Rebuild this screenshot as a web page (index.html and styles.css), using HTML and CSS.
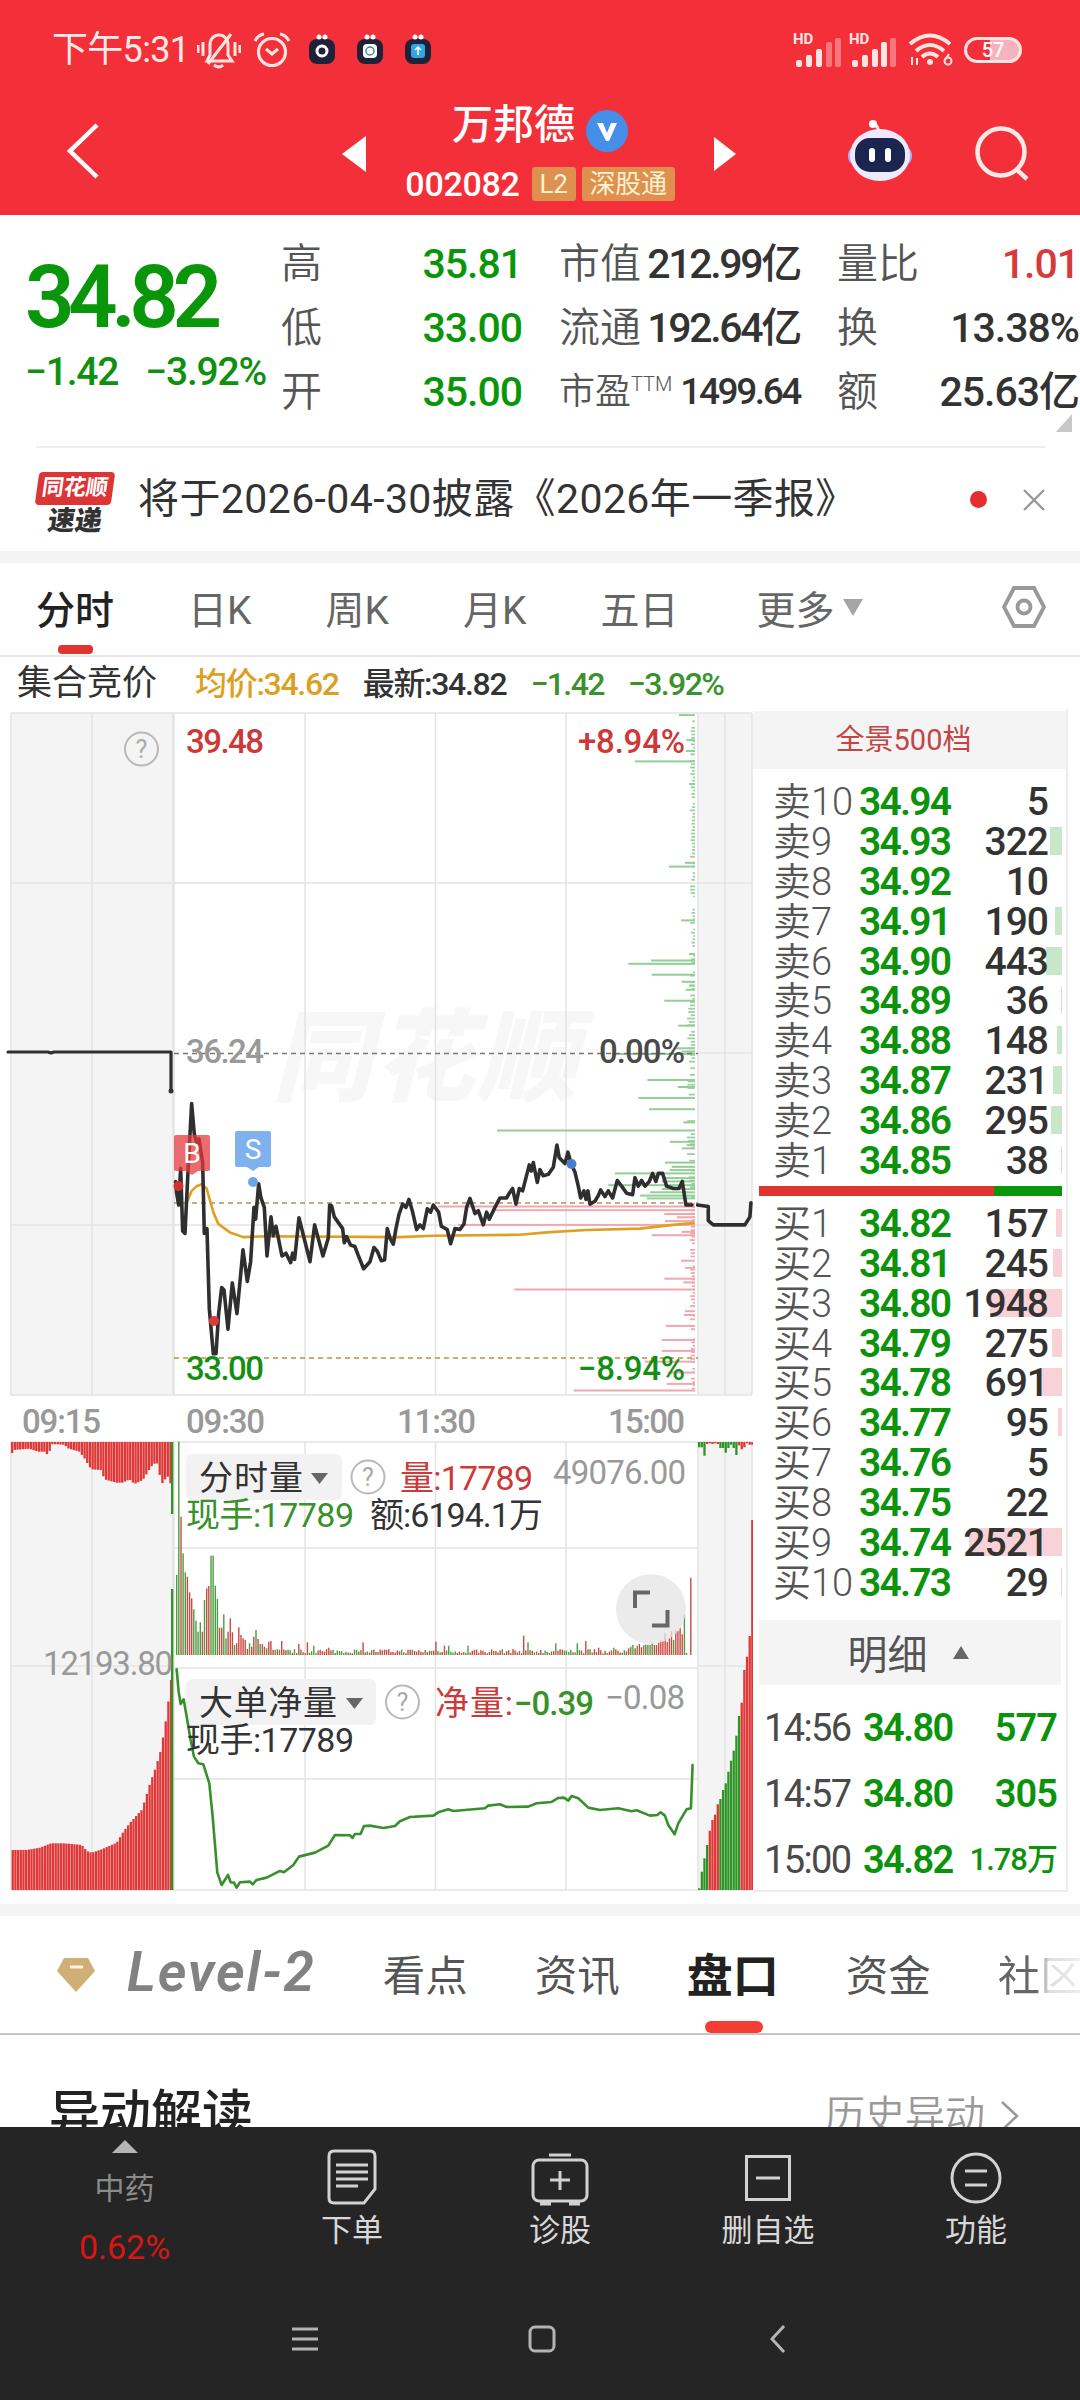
FILE: index.html
```html
<!DOCTYPE html>
<html lang="zh-CN">
<head>
  <meta charset="UTF-8">
  <meta name="viewport" content="width=device-width, initial-scale=1.0">
  <title>万邦德 002082</title>
  <link rel="stylesheet" href="styles.css">
</head>
<body>
  <header class="top">
    <div class="status">
      <span class="clock">下午5:31</span>
      <svg class="s-bell" width="44" height="38" viewBox="0 0 44 38" fill="none" stroke="#ffe4e0" stroke-width="3">
        <path d="M10 30h25l-4-6V14c0-6-4-10-9-10s-9 4-9 10v10z"/><path d="M17 34q5 4 9 0M34 3L11 33M6 11v14M1 14v8M38 11v14M43 14v8"/>
      </svg>
      <svg class="s-alarm" width="38" height="36" viewBox="0 0 38 36" fill="none" stroke="#ffe4e0" stroke-width="3.2">
        <circle cx="19" cy="20" r="13.5"/><path d="M13 17l6 5 6-5M2 9q3-6 9-7M36 9q-3-6-9-7"/>
      </svg>
      <svg class="s-app" width="28" height="32" viewBox="0 0 28 32"><rect x="1" y="5" width="26" height="25" rx="8" fill="#20223a"/><circle cx="11" cy="3" r="2.5" fill="#fff"/><circle cx="17" cy="3" r="2.5" fill="#fff"/><circle cx="14" cy="17" r="5" fill="none" stroke="#fff" stroke-width="3"/></svg>
      <svg class="s-app" width="28" height="32" viewBox="0 0 28 32"><rect x="1" y="5" width="26" height="25" rx="8" fill="#20223a"/><circle cx="11" cy="3" r="2.5" fill="#fff"/><circle cx="17" cy="3" r="2.5" fill="#fff"/><rect x="7" y="10" width="14" height="14" rx="4" fill="#fff"/><circle cx="14" cy="17" r="4" fill="none" stroke="#3a8f9a" stroke-width="1.5"/></svg>
      <svg class="s-app" width="28" height="32" viewBox="0 0 28 32"><rect x="1" y="5" width="26" height="25" rx="8" fill="#20223a"/><circle cx="11" cy="3" r="2.5" fill="#fff"/><circle cx="17" cy="3" r="2.5" fill="#fff"/><rect x="7" y="10" width="14" height="14" rx="3" fill="#2fa8e0"/><path d="M14 21v-8M11 16l3-3 3 3" fill="none" stroke="#fff" stroke-width="1.5"/></svg>
      <svg class="s-net" width="104" height="38" viewBox="0 -4 104 38" fill="#ffe4e0">
        <text class="hd" x="0" y="9">HD</text><text class="hd" x="56" y="9">HD</text>
        <rect x="3" y="25" width="6" height="7" rx="2"/><rect x="13" y="20" width="6" height="12" rx="2"/><rect x="23" y="14" width="6" height="18" rx="2"/>
        <g opacity=".4"><rect x="33" y="7" width="6" height="25" rx="2"/><rect x="42" y="3" width="6" height="29" rx="2"/></g>
        <rect x="59" y="25" width="6" height="7" rx="2"/><rect x="69" y="20" width="6" height="12" rx="2"/><rect x="79" y="14" width="6" height="18" rx="2"/><rect x="88" y="7" width="6" height="25" rx="2"/>
        <rect x="97" y="3" width="6" height="29" rx="2" opacity=".4"/>
      </svg>
      <svg class="s-wifi" width="46" height="34" viewBox="0 0 46 34" fill="none" stroke="#ffe4e0" stroke-width="4">
        <path d="M2 11q20-17 40 0M8 18q14-12 28 0M14 24q8-7 16 0"/><circle cx="22" cy="29" r="3" fill="#ffe4e0" stroke="none"/>
        <path stroke-width="2" d="M4 24v8M9 25v7"/><circle cx="40" cy="28" r="3.5" stroke-width="2"/><path stroke-width="2" d="M37 27l4-6"/>
      </svg>
      <div class="battery">57</div>
    </div>
    <div class="titlebar">
      <div class="back"><svg width="36" height="60" viewBox="0 0 36 60" fill="none" stroke="#fff" stroke-width="4.5"><path d="M33 4L6 30l27 26"/></svg></div>
      <svg width="24" height="36" viewBox="0 0 24 36"><path d="M0 18L24 0v36z" fill="#fff"/></svg>
      <div class="title">
        <div class="name"><span>万邦德</span><svg width="42" height="42" viewBox="0 0 42 42"><circle cx="21" cy="21" r="21" fill="#468fe8"/><path d="M11 13l9 18h3l8-18h-6l-4 10-4-10z" fill="#fff"/></svg></div>
        <div class="code">002082 <b>L2</b><b>深股通</b></div>
      </div>
      <svg width="22" height="34" viewBox="0 0 22 34"><path d="M22 17L0 0v34z" fill="#fff"/></svg>
      <div class="tools">
        <svg width="64" height="62" viewBox="0 0 64 62">
          <path d="M31 12q-2-8-6-9" fill="none" stroke="#ffe4ea" stroke-width="3"/><circle cx="25" cy="4" r="4" fill="#fff"/>
          <rect x="0" y="27" width="64" height="18" rx="8" fill="#b9a6ee"/><ellipse cx="32" cy="35" rx="30" ry="26" fill="#eeeafe"/><rect x="7" y="18" width="50" height="34" rx="15" fill="#1c2450"/>
          <rect x="21" y="28" width="6" height="14" rx="3" fill="#fff"/><rect x="37" y="28" width="6" height="14" rx="3" fill="#fff"/>
        </svg>
        <svg width="56" height="56" viewBox="0 0 56 56" fill="none" stroke="#ffe9e6" stroke-width="4.5"><circle cx="26" cy="26" r="23.5"/><path d="M41 43l11 10"/></svg>
      </div>
    </div>
  </header>

  <section class="quote">
    <div class="price">
      <div class="last">34.82</div>
      <div class="change"><span>−1.42</span><span>−3.92%</span></div>
    </div>
    <div class="stats">
      <div class="stat"><i>高</i><b class="green">35.81</b></div>
      <div class="stat tight"><i>市值</i><b>212.99亿</b></div>
      <div class="stat"><i>量比</i><b class="red">1.01</b></div>
      <div class="stat"><i>低</i><b class="green">33.00</b></div>
      <div class="stat tight"><i>流通</i><b>192.64亿</b></div>
      <div class="stat"><i>换</i><b>13.38%</b></div>
      <div class="stat"><i>开</i><b class="green">35.00</b></div>
      <div class="stat small"><i>市盈<sup>TTM</sup></i><b>1499.64</b></div>
      <div class="stat"><i>额</i><b>25.63亿</b></div>
    </div>
    <svg class="corner" width="16" height="18" viewBox="0 0 16 18"><path d="M16 0v18H0z" fill="#c8c8c8"/></svg>
  </section>

  <section class="news">
    <div class="news-logo"><span class="bubble">同花顺</span><span class="express">速递</span></div>
    <p>将于2026-04-30披露《2026年一季报》</p>
    <span class="dot"></span>
    <svg width="22" height="22" viewBox="0 0 22 22" stroke="#999" stroke-width="2.4"><path d="M1 1l20 20M21 1L1 21"/></svg>
  </section>

  <nav class="periods">
    <a class="active">分时</a><a>日K</a><a>周K</a><a>月K</a><a>五日</a>
    <a class="more">更多<svg width="20" height="17" viewBox="0 0 20 17"><path d="M0 0h20L10 17z" fill="#a5a5a5"/></svg></a>
    <svg class="hex" width="44" height="42" viewBox="0 0 44 42" fill="none" stroke="#999" stroke-width="3.8"><path d="M12 2h20l10 19-10 19H12L2 21z"/><circle cx="22" cy="21" r="6.5"/></svg>
  </nav>

  <div class="legend">
    <span class="auction">集合竞价</span><span class="avg">均价:34.62</span><span>最新:34.82</span><span class="lgreen">−1.42</span><span class="lgreen">−3.92%</span>
  </div>

  <main class="board">
    <svg class="charts" width="753" height="1184" viewBox="0 709 753 1184">
      <rect x="11" y="713" width="162" height="682" fill="#f4f4f4"/><rect x="698" y="713" width="54" height="682" fill="#f4f4f4"/>
      <rect x="11" y="1442" width="162" height="448" fill="#f4f4f4"/><rect x="698" y="1442" width="54" height="448" fill="#f4f4f4"/>
      <text class="watermark" x="272" y="1093" textLength="305">同花顺</text>
      <path class="grid" d="M11 713H752M11 883H752M11 1225H752M11 1395H752M698 1053H752M11 713V1395M92 713V1395M305 713V1395M435.500 713V1395M566 713V1395M698 713V1395M725 713V1395M752 713V1395
        M11 1442H752M173 1548H698M173 1668H698M11 1666H173M698 1666H752M173 1779H698M11 1890H752M11 1442V1890M92 1442V1890M305 1442V1890M435.500 1442V1890M566 1442V1890M698 1442V1890M725 1442V1890M752 1442V1890"/>
      <path class="grid thick" d="M173.500 713V1395M173.500 1442V1890"/>
      <g id="depth"></g>
      <path class="dash" d="M174 1053.500H698"/>
      <path class="dash brown" d="M174 1203H698"/>
      <path class="dash gold" d="M174 1358H698"/>
      <g transform="translate(0 700) scale(.3333 .472)"><polyline id="avg" class="line avg-line"/><polyline id="price" class="line"/><polyline id="close" class="line"/></g>
      <path class="line open-line" d="M8 1052H48l3 1 3-1H171V1091"/>
      <circle cx="171" cy="1091" r="2.500" fill="#333"/>

      <circle cx="178.500" cy="1186" r="5" fill="#d03232"/><circle cx="214" cy="1321" r="5" fill="#e03a3a"/>
      <circle cx="253" cy="1182" r="5" fill="#6aa6ea"/><circle cx="571.500" cy="1164" r="5" fill="#4a7fc8"/>
      <path d="M176 1135h32q2 0 2 2v32q0 2-2 2h-10l-6 4-6-4h-10q-2 0-2-2v-32q0-2 2-2z" fill="#e6393f" opacity=".75"/>
      <path d="M237 1131h32q2 0 2 2v32q0 2-2 2h-10l-6 4-6-4h-10q-2 0-2-2v-32q0-2 2-2z" fill="#7fb1ef"/>
      <text class="mark" x="192" y="1163">B</text><text class="mark" x="253" y="1159">S</text>

      <g class="help"><circle cx="141.500" cy="749" r="16.500"/><text x="141.500" y="758">?</text></g>
      <text class="num c-red" x="186" y="753" textLength="78">39.48</text>
      <text class="num c-gray" x="186" y="1063" textLength="78">36.24</text>
      <text class="num c-green" x="186" y="1380" textLength="78">33.00</text>
      <text class="num c-red" x="578" y="753" textLength="107">+8.94%</text>
      <text class="num c-dark" x="599" y="1063" textLength="86">0.00%</text>
      <text class="num c-green" x="578" y="1380" textLength="107">−8.94%</text>
      <text class="num c-gray" x="22" y="1433" textLength="79">09:15</text>
      <text class="num c-gray" x="186" y="1433" textLength="79">09:30</text>
      <text class="num c-gray" x="397" y="1433" textLength="79">11:30</text>
      <text class="num c-gray" x="608" y="1433" textLength="77">15:00</text>

      <g id="volume"></g>
      <g id="auction"></g>
      <text class="num c-gray reg" x="43" y="1675" textLength="130">12193.80</text>
      <rect x="186" y="1454" width="156" height="46" rx="6" fill="#f2f2f2"/>
      <text class="cn" x="199" y="1490" textLength="104">分时量</text>
      <path d="M311 1473h17l-8.500 11z" fill="#666"/>
      <g class="help"><circle cx="368" cy="1477" r="16.500"/><text x="368" y="1486">?</text></g>
      <text class="cn c-red" x="400" y="1490" textLength="133">量:17789</text>
      <text class="num c-gray reg" x="553" y="1484" textLength="133">49076.00</text>
      <text class="cn c-lgreen" x="186" y="1527" textLength="168">现手:17789</text>
      <text class="cn" x="370" y="1527" textLength="173">额:6194.1万</text>
      <circle cx="651" cy="1609" r="35" fill="#e4e4e4" opacity=".75"/>
      <path d="M635 1608V1592.500H650M652 1625.500H667.500V1610" fill="none" stroke="#666" stroke-width="4"/>

      <rect x="186" y="1679" width="190" height="46" rx="6" fill="#f2f2f2"/>
      <g transform="translate(0 1420) scale(.3333)"><polyline id="net" class="line net-line"/></g>
      <text class="cn" x="199" y="1715" textLength="138">大单净量</text>
      <path d="M346 1698h17l-8.500 11z" fill="#666"/>
      <g class="help"><circle cx="402.500" cy="1702" r="16.500"/><text x="402.500" y="1711">?</text></g>
      <text class="cn c-red" x="435" y="1715" textLength="78">净量:</text>
      <text class="num c-lgreen" x="514" y="1715" textLength="80">−0.39</text>
      <text class="num c-gray reg" x="605" y="1709" textLength="80">−0.08</text>
      <text class="cn" x="186" y="1752" textLength="168">现手:17789</text>
    </svg>

    <aside class="book">
      <div class="book-head">全景500档</div>
      <div class="rows" id="sells"></div>
      <div class="ratio"><span></span></div>
      <div class="rows" id="buys"></div>
      <div class="detail">明细<svg width="16" height="13" viewBox="0 0 16 13"><path d="M8 0l8 13H0z" fill="#666"/></svg></div>
      <div class="trade"><time>14:56</time><b>34.80</b><em>577</em></div>
      <div class="trade"><time>14:57</time><b>34.80</b><em>305</em></div>
      <div class="trade"><time>15:00</time><b>34.82</b><em class="wan">1.78万</em></div>
    </aside>
  </main>

  <nav class="sections">
    <svg width="40" height="36" viewBox="0 0 40 36"><path d="M8 1h24l7 13-19 21L1 14z" fill="#cfae78"/><path d="M14 10h13" stroke="#fff3dc" stroke-width="3"/></svg>
    <a class="level">Level-2</a><a>看点</a><a>资讯</a><a class="active">盘口</a><a>资金</a><a class="fade">社区</a>
  </nav>
  <section class="unusual">
    <h2>异动解读</h2>
    <a>历史异动<svg width="20" height="30" viewBox="0 0 20 30" fill="none" stroke="#999" stroke-width="2.500"><path d="M2 1l15 14L2 29"/></svg></a>
  </section>

  <footer>
    <div class="actions">
      <div class="index"><svg width="26" height="13" viewBox="0 0 26 13"><path d="M13 0l13 13H0z" fill="#b5b5b5"/></svg><span>中药</span><b>0.62%</b></div>
      <div class="action"><svg width="60" height="60" viewBox="0 0 60 60"><path d="M12 4h36q5 0 5 5v33L42 56H12q-5 0-5-5V9q0-5 5-5z"/><path d="M14 18h32M14 25h32M14 32h32M14 39h22"/></svg>下单</div>
      <div class="action"><svg width="60" height="60" viewBox="0 0 60 60"><rect x="3" y="13" width="54" height="41" rx="6"/><path d="M19 8h22M30 24v19M20 33h20"/><path stroke-width="5" d="M10 56h11M39 56h11"/></svg>诊股</div>
      <div class="action"><svg width="60" height="60" viewBox="0 0 60 60"><rect x="8.500" y="9.500" width="43" height="43"/><path d="M18 31h24"/></svg>删自选</div>
      <div class="action"><svg width="60" height="60" viewBox="0 0 60 60"><circle cx="30" cy="31" r="24"/><path d="M19 24h22M19 38h22"/></svg>功能</div>
    </div>
    <div class="system">
      <svg width="26" height="28" viewBox="0 0 26 28"><path d="M0 4h26M0 14h26M0 24h26"/></svg>
      <svg width="28" height="28" viewBox="0 0 28 28"><rect x="2" y="2" width="24" height="24" rx="5"/></svg>
      <svg width="16" height="28" viewBox="0 0 16 28"><path d="M14 1L2 14l12 13"/></svg>
    </div>
  </footer>
  <script src="script.js"></script>
</body>
</html>
```
FILE: styles.css
```css
body {
  margin: 0;
  width: 1080px;
  height: 2400px;
  overflow: hidden;
  background: #fff;
  color: #333;
  font-family: Roboto, "Noto Sans CJK SC", sans-serif;
}
svg { display: block; flex: none; }
i, em { font-style: normal; }
.green { color: #0a960a; }
.red { color: #d63a3a; }

/* header */
.top { height: 215px; background: #f3303a; color: #fff; }
.status {
  display: flex;
  align-items: center;
  height: 100px;
  padding-left: 52px;
}
.clock { width: 145px; font-size: 36px; letter-spacing: -.7px; line-height: 40px; white-space: nowrap; color: #ffe9e6; }
.s-alarm { margin: 0 17px 0 12px; }
.s-app { margin-right: 20px; }
.s-net { margin: 0 11px 0 341px; }
.hd { font: 700 15px Roboto, sans-serif; }
.s-wifi { margin-right: 10px; }
.battery {
  box-sizing: border-box;
  width: 58px;
  height: 26px;
  border: 3px solid #ffe4e0;
  border-radius: 13px;
  background: linear-gradient(90deg, transparent 44%, #f6b3bf 44%);
  font: 500 20px/20px Roboto, sans-serif;
  text-align: center;
}
.titlebar {
  display: grid;
  grid-template-columns: 342px 24px 348px 22px 1fr;
  align-items: center;
  height: 107px;
}
.back { padding-left: 64px; margin-top: -6px; }
.title { display: flex; flex-direction: column; align-items: center; margin-top: -1px; }
.name { display: flex; gap: 11px; align-items: center; height: 50px; font-size: 41px; line-height: 50px; font-weight: 500; white-space: nowrap; }
.name span { margin-top: -11px; }
.code { display: flex; align-items: center; margin-top: 11px; height: 34px; font-size: 34px; line-height: 34px; font-weight: 500; letter-spacing: -.3px; }
.code b {
  margin-left: 6px;
  padding: 0 8px;
  border-radius: 3px;
  background: #de904f;
  color: #fff0cf;
  font-size: 26px;
  font-weight: 400;
}
.code b:first-of-type { margin-left: 12px; }
.tools { display: flex; justify-content: space-between; align-items: center; padding: 0 49px 0 112px; }
.tools svg:first-child { margin-top: -5px; }

/* quote */
.quote { position: relative; display: flex; height: 231px; }
.price { width: 256px; padding-left: 25px; white-space: nowrap; }
.last { margin-top: 31px; font-size: 87px; line-height: 103px; font-weight: 600; letter-spacing: -6.6px; color: #0a960a; }
.change { display: flex; gap: 27px; margin-top: 1px; font-size: 39px; line-height: 44px; font-weight: 500; letter-spacing: -1.2px; color: #0f910f; }
.stats {
  display: grid;
  grid-template-columns: 241px 241px 242px;
  grid-template-rows: 64px 64px 64px;
  column-gap: 37px;
  margin-top: 17px;
}
.stat { display: flex; justify-content: space-between; align-items: center; line-height: 60px; white-space: nowrap; }
.stat i { font-size: 41px; font-weight: 350; color: #555; }
.stat b { font-size: 41px; font-weight: 500; letter-spacing: -1px; }
.stat.tight b { font-size: 41px; letter-spacing: -2.3px; }
.stat.small i { font-size: 36px; }
.stat.small b { font-size: 37px; letter-spacing: -2.4px; }
.stat sup { font-size: 20px; line-height: 0; vertical-align: 13px; }
.corner { position: absolute; right: 8px; bottom: 14px; }

/* news */
.news {
  display: flex;
  align-items: center;
  box-sizing: border-box;
  height: 105px;
  margin: 0 35px 0 36px;
  border-top: 2px solid #eee;
}
.news-logo { display: flex; flex-direction: column; align-items: center; width: 78px; margin-top: 12px; transform: translateY(-1px); }
.bubble { width: 76px; height: 33px; border-radius: 4px; background: #dd3436; color: #fff; font-size: 22px; line-height: 32px; font-weight: 700; text-align: center; transform: skewX(-8deg); }
.express { font-size: 27px; line-height: 32px; font-weight: 900; transform: skewX(-8deg); }
.news p { flex: 1; margin: -2px 0 0 24px; font-size: 41px; line-height: 56px; letter-spacing: .4px; white-space: nowrap; }
.dot { width: 17px; height: 17px; margin-right: 36px; border-radius: 50%; background: #e52f2f; }

/* period tabs */
.periods {
  display: flex;
  align-items: center;
  gap: 74px;
  box-sizing: border-box;
  height: 106px;
  padding: 0 34px 4px 36px;
  border-top: 12px solid #f4f4f4;
  border-bottom: 2px solid #e8e8e8;
  font-size: 39px;
  color: #666;
}
.periods a, .sections a { display: flex; align-items: center; position: relative; white-space: nowrap; }
.periods .active { font-weight: 500; color: #222; }
.periods .active::after {
  content: "";
  position: absolute;
  left: 22px;
  bottom: -19px;
  width: 35px;
  height: 9px;
  border-radius: 4px;
  background: #e0352f;
}
.periods .more { gap: 8px; margin-left: 4px; }
.hex { margin-left: auto; }

.legend { display: flex; align-items: center; height: 52px; padding: 2px 0 0 17px; box-sizing: border-box; font-size: 32px; line-height: 40px; font-weight: 500; letter-spacing: -1.3px; white-space: nowrap; }
.legend span { margin-right: 24px; }
.legend .auction { width: 139px; margin-right: 39px; font-size: 35px; font-weight: 400; letter-spacing: 0; }
.legend .avg { color: #dd9f22; }
.legend .lgreen { color: #3b922c; letter-spacing: -1.6px; }

/* charts */
.board { display: flex; height: 1184px; }
.grid { fill: none; stroke: #e3e3e3; stroke-width: 1.5; }
.thick { stroke-width: 2.5; }
.dash { fill: none; stroke: #777; stroke-width: 1.5; stroke-dasharray: 5 4; }
.brown { stroke: #a99365; }
.gold { stroke: #b4953c; }
.line { fill: none; stroke: #2f2f2f; stroke-width: 3.6; stroke-linejoin: round; stroke-linecap: round; vector-effect: non-scaling-stroke; }
.open-line { stroke-width: 3.2; }
.avg-line { stroke: #dfa021; stroke-width: 2.6; }
.net-line { stroke: #37902b; stroke-width: 2.6; }
.watermark { font-size: 100px; font-weight: 900; font-style: italic; fill: #f7f7f7; }
.num { font-size: 33px; font-weight: 500; }
.reg { font-weight: 400; }
.cn { font-size: 34px; fill: #333; }
.mark { font-size: 28px; fill: #fff; text-anchor: middle; }
.help circle { fill: none; stroke: #b8b8b8; stroke-width: 2; }
.help text { font-size: 25px; fill: #aaa; text-anchor: middle; }
.c-red { fill: #cd3838; }
.c-green { fill: #148f14; }
.c-lgreen { fill: #38912b; }
.c-gray { fill: #999; }
.c-dark { fill: #4a4a4a; }

/* order book */
.book { box-sizing: border-box; width: 315px; height: 1183px; border: solid #ececec; border-width: 0 2px 2px 0; }
.book-head { height: 58px; margin-top: 2px; background: #f4f4f4; color: #c54545; font-size: 29px; line-height: 58px; text-align: center; padding-right: 12px; }
.rows { padding-top: 13px; }
#buys { padding-top: 8px; }
.row {
  position: relative;
  display: grid;
  grid-template-columns: 86px 100px 89px;
  align-items: center;
  height: 39.9px;
  padding-left: 20px;
  line-height: 38px;
  white-space: nowrap;
}
.row i { font-size: 38px; font-weight: 350; color: #555; }
.row b { font-size: 39px; font-weight: 600; letter-spacing: -1.8px; color: #0b930b; }
.row em { z-index: 1; justify-self: end; font-size: 39px; font-weight: 500; letter-spacing: -1px; }
.row .bar { position: absolute; right: 4px; top: 5px; height: 28px; }
#sells .bar { background: #c8e6c8; }
#buys .bar { background: #f9d2d7; }
.ratio { height: 10px; margin: 5px 4px 0 6px; background: #0a960a; }
.ratio span { display: block; width: 235px; height: 10px; background: #e2342f; }
.detail { display: flex; justify-content: center; align-items: center; gap: 25px; height: 65px; margin: 17px 5px 10px 6px; padding-right: 4px; box-sizing: border-box; background: #f4f4f4; font-size: 40px; color: #555; }
.trade { display: grid; grid-template-columns: 99px 90px 104px; align-items: center; height: 66px; padding-left: 11px; font-size: 38px; line-height: 46px; letter-spacing: -1.6px; white-space: nowrap; }
.trade time { color: #4a4a4a; }
.trade b { font-weight: 600; color: #0b930b; }
.trade em { justify-self: end; font-weight: 600; letter-spacing: -1px; color: #0b930b; }
.trade .wan { font-size: 31px; font-weight: 500; }

/* section tabs */
.sections {
  display: flex;
  align-items: center;
  gap: 67px;
  box-sizing: border-box;
  height: 131px;
  margin-top: 11px;
  padding-left: 56px;
  border-top: 12px solid #f4f4f4;
  border-bottom: 2px solid #c6c6c6;
  font-size: 42.5px;
  color: #555;
}
.sections a { box-sizing: border-box; height: 117px; padding-bottom: 5px; }
.sections .level { width: 195px; margin-left: -36px; font-size: 55px; font-weight: 600; font-style: italic; letter-spacing: 1.8px; color: #828282; }
.sections .active { font-size: 46px; font-weight: 700; color: #222; }
.sections .active::after { content: ""; position: absolute; left: 18px; bottom: 0; width: 58px; height: 12px; border-radius: 6px; background: #f43d34; }
.sections .fade { background: linear-gradient(90deg, #666 45%, #ddd 60%, #eee); background-clip: text; -webkit-background-clip: text; color: transparent; }

.unusual { display: flex; justify-content: space-between; align-items: flex-start; height: 92px; padding: 0 60px 0 49px; overflow: hidden; }
.unusual h2 { margin: 45px 0 0; font-size: 51px; line-height: 70px; font-weight: 500; color: #222; }
.unusual a { display: flex; align-items: center; gap: 15px; margin-top: 51px; font-size: 40px; line-height: 60px; color: #999; font-weight: 350; }

/* bottom bar */
footer { position: relative; height: 273px; background: #252525; color: #d8d8d8; }
.actions { display: grid; grid-template-columns: 248px 208px 208px 208px 208px; height: 176px; }
.index, .action { display: flex; flex-direction: column; align-items: center; }
.index { padding: 13px 0 0 1px; }
.index span { margin-top: 15px; font-size: 30px; line-height: 42px; color: #8b8b8b; }
.index b { margin-top: 17px; font-size: 34px; line-height: 40px; font-weight: 400; color: #d81616; }
.action { padding-top: 20px; font-size: 31px; line-height: 44px; }
.action svg { margin-bottom: 2px; fill: none; stroke: #d2d2d2; stroke-width: 3; }
.system { display: flex; align-items: center; margin-top: 22px; padding-left: 292px; }
.system svg { fill: none; stroke: #b4b4b4; stroke-width: 3; }
.system svg + svg { margin-left: 210px; }
.system svg:last-child { margin-left: 214px; }
```
FILE: script.js
```js
const RED = "#e03636";
const GREEN = "#2f9427";

// order book: label, price, volume
const sells = [[10, "34.94", 5], [9, "34.93", 322], [8, "34.92", 10], [7, "34.91", 190], [6, "34.90", 443],
  [5, "34.89", 36], [4, "34.88", 148], [3, "34.87", 231], [2, "34.86", 295], [1, "34.85", 38]];
const buys = [[1, "34.82", 157], [2, "34.81", 245], [3, "34.80", 1948], [4, "34.79", 275], [5, "34.78", 691],
  [6, "34.77", 95], [7, "34.76", 5], [8, "34.75", 22], [9, "34.74", 2521], [10, "34.73", 29]];

function fillRows(id, word, rows) {
  document.getElementById(id).innerHTML = rows.map(([n, price, vol]) => {
    const w = vol < 25 ? 0 : Math.max(1, Math.round(vol / 2521 * 93));
    return `<div class="row"><i>${word}${n}</i><b>${price}</b><em>${vol}</em><span class="bar" style="width:${w}px"></span></div>`;
  }).join("");
}
fillRows("sells", "卖", sells);
fillRows("buys", "买", buys);

// fixed-seed noise for the small bars
let seed = 7;
function rnd() {
  seed = (seed * 16807) % 2147483647;
  return seed / 2147483647;
}

function setPoints(id, pts) {
  document.getElementById(id).setAttribute("points", pts);
}

// price line
setPoints("price", "527,1020 530,1045 536,1070 542,992 548,1125 555,1130 564,1000 575,855 583,920 590,938 597,930 608,980 613,1130 621,1120 628,1290 640,1385 648,1385 656,1300 665,1245 672,1250 684,1333 697,1235 711,1300 729,1165 742,1232 752,1190 762,1075 767,1100 776,1025 783,1055 793,1075 801,1178 813,1095 820,1135 828,1115 846,1178 858,1172 872,1192 878,1172 884,1185 897,1097 930,1190 944,1112 969,1178 985,1140 989,1070 995,1072 1003,1095 1028,1120 1033,1150 1040,1137 1052,1155 1065,1158 1074,1175 1091,1205 1110,1190 1122,1160 1132,1168 1144,1188 1154,1186 1162,1120 1170,1140 1180,1153 1188,1120 1197,1090 1208,1068 1218,1075 1227,1058 1238,1085 1250,1122 1260,1112 1270,1120 1282,1078 1292,1085 1300,1070 1316,1085 1324,1115 1342,1122 1352,1152 1365,1120 1380,1122 1392,1110 1400,1075 1410,1056 1425,1088 1435,1082 1450,1112 1460,1085 1468,1100 1485,1075 1500,1055 1520,1055 1528,1045 1538,1035 1548,1068 1558,1035 1568,1040 1588,985 1594,998 1600,980 1612,1022 1620,995 1630,1008 1645,1005 1660,990 1671,943 1678,970 1695,982 1704,958 1715,985 1725,1000 1735,1030 1742,1055 1752,1040 1758,1058 1764,1040 1770,1068 1785,1062 1795,1050 1802,1038 1815,1052 1825,1040 1838,1055 1852,1018 1865,1030 1880,1045 1898,1048 1905,1012 1915,1030 1925,1018 1935,1030 1948,1020 1958,1003 1968,1020 1975,1003 1988,1003 2000,1030 2020,1035 2037,1035 2047,1020 2058,1070 2076,1070");
setPoints("close", "2093,1070 2125,1073 2125,1103 2140,1112 2235,1112 2250,1095 2253,1065");
setPoints("avg", "560,1065 575,1040 590,1030 605,1026 620,1035 640,1085 655,1110 690,1128 730,1138 800,1136 1200,1138 1300,1135 1560,1133 1640,1128 1760,1123 1920,1120 2020,1112 2080,1108");
setPoints("net", "530,748 536,815 542,852 551,838 560,890 572,960 582,1010 595,1030 610,1033 628,1090 638,1190 652,1358 665,1395 684,1365 692,1387 702,1388 710,1403 720,1387 750,1385 758,1393 770,1380 800,1373 840,1353 852,1357 880,1335 897,1310 945,1298 985,1277 1005,1245 1050,1246 1058,1254 1065,1242 1082,1242 1092,1218 1110,1217 1150,1224 1185,1218 1200,1204 1230,1191 1300,1187 1315,1177 1345,1168 1360,1173 1455,1165 1465,1157 1500,1153 1520,1161 1585,1160 1610,1150 1655,1146 1675,1134 1692,1133 1705,1142 1715,1128 1735,1135 1765,1163 1800,1170 1855,1165 1895,1174 1910,1171 1950,1187 1972,1185 1982,1177 1995,1187 2005,1215 2024,1243 2035,1210 2060,1168 2073,1165 2078,1035");

// price depth: [y, length], drawn leftwards from x = 695
const asks = [[32, 48], [85, 26], [108, 28], [130, 180], [178, 18], [345, 30], [353, 78], [467, 42], [538, 18], [552, 132],
  [559, 200], [582, 130], [597, 40], [605, 18], [614, 28], [637, 92], [690, 50], [738, 60], [745, 40], [750, 250], [805, 143],
  [820, 52], [843, 170], [867, 138], [895, 35], [912, 594], [936, 76], [943, 25], [950, 40], [980, 90], [989, 70], [996, 76],
  [1003, 240], [1013, 90], [1020, 100], [1028, 260], [1036, 100], [1043, 135], [1050, 165], [1056, 145]];
const bids = [[1073, 770], [1081, 600], [1089, 92], [1096, 55], [1104, 90], [1112, 710], [1127, 40], [1134, 130], [1188, 42],
  [1203, 30], [1226, 92], [1234, 35], [1249, 542], [1295, 30], [1303, 33], [1326, 88], [1356, 100], [1379, 100], [1402, 150],
  [1425, 80], [1449, 85], [1463, 364]];
let depth = "";
function depthBar(y, len, color, h) {
  depth += `<rect x="${(695 - len / 3).toFixed(1)}" y="${(700 + y * 0.472 - h / 2).toFixed(1)}" width="${(len / 3).toFixed(1)}" height="${h}" fill="${color}"/>`;
}
for (let y = 38; y < 1465; y += 7) {
  if (rnd() < 0.25) continue;
  const near = y > 640 && y < 1062;
  depthBar(y, (near ? 10 : 5) + rnd() * (near ? 14 : 11), y < 1065 ? "#9dd0a0" : "#eea9ae", 1.8);
}
asks.forEach(([y, len]) => depthBar(y, len, "#93cd98", 2));
bids.forEach(([y, len]) => depthBar(y, len, "#f2a7ad", 2));
document.getElementById("depth").innerHTML = depth;

// minute volume
const opening = [240, 640, 415, 305, 248, 235, 188, 170, 137, 103, 70, 98, 70, 165, 200, 207, 298, 298, 208, 168, 82, 82, 122, 50, 70,
  110, 68, 30, 35, 83, 60, 50, 45, 18, 35, 25, 55, 75, 48, 33, 33, 25, 20, 40, 42];
const openColors = "ggrggrrrggggrgrrggggrrggrrrgrrrrrrgrrgrgrrgrr";
const peaks = { 49: 42, 57: 33, 61: 38, 64: 28, 71: 22, 87: 38, 121: 40, 125: 28, 127: 28, 136: 28, 162: 58, 164: 38, 177: 35,
  187: 35, 191: 42, 197: 22, 204: 22, 213: 30, 215: 28, 221: 30, 225: 38, 228: 65, 230: 50, 231: 72, 233: 74, 234: 72, 235: 82,
  236: 62, 237: 122, 240: 232 };
let volume = "";
for (let i = 0; i < 241; i++) {
  if (i === 239) continue;
  let h = opening[i] || peaks[i] || 5 + rnd() * 13;
  if (i > 210 && i < 238 && !peaks[i]) h += 8 + (i - 210) * 1.2;
  const green = openColors[i] ? openColors[i] === "g" : i === 237 || (!(i === 240 || peaks[i] > 40) && rnd() < 0.45);
  volume += `<rect x="${(176 + i * 2.142).toFixed(1)}" y="${(1655 - h / 3).toFixed(1)}" width="1.4" height="${(h / 3).toFixed(1)}" fill="${green ? "#4c9c40" : "#c94a42"}"/>`;
}
document.getElementById("volume").innerHTML = volume;

// call auction bars, profile given as [x, y] and interpolated
function at(profile, x) {
  for (let i = 1; i < profile.length; i++) {
    const [x0, y0] = profile[i - 1], [x1, y1] = profile[i];
    if (x <= x1) return y0 + (y1 - y0) * (x - x0) / (x1 - x0);
  }
  return profile[profile.length - 1][1];
}
const hang = [[31, 103], [38, 90], [85, 86], [110, 95], [135, 95], [142, 115], [149, 72], [190, 74], [200, 85], [235, 95], [250, 115],
  [270, 148], [300, 150], [310, 178], [345, 188], [365, 188], [385, 178], [400, 192], [425, 180], [450, 140], [465, 126], [472, 138],
  [480, 195], [490, 180], [500, 170], [510, 195]];
const rise = [[31, 1290], [75, 1290], [115, 1283], [148, 1270], [190, 1270], [240, 1275], [255, 1293], [270, 1298], [300, 1288],
  [345, 1268], [365, 1235], [385, 1208], [420, 1170], [430, 1140], [445, 1090], [460, 1048], [475, 1000], [488, 930], [497, 870],
  [505, 800], [513, 745]];
let auction = "";
function auctionBar(x, top, bottom, color) {
  auction += `<rect x="${x.toFixed(2)}" y="${(1420 + top / 3).toFixed(1)}" width="2.3" height="${((bottom - top) / 3).toFixed(1)}" fill="${color}"/>`;
}
for (let i = 0; i < 60; i++) {
  const x = 33 + i * 8.05;
  auctionBar(x / 3, 66, at(hang, x), RED);
  auctionBar(x / 3 + 0.6, at(rise, x), 1410, RED);
}
auctionBar(171, 66, 282, GREEN);
auctionBar(171, 507, 1410, GREEN);
const closing = [1405, 1355, 1315, 1275, 1232, 1200, 1184, 1153, 1137, 1110, 1090, 1055, 1022, 992, 947, 888, 848, 750, 710, 648, 300];
const closingTop = [82, 82, 107, 72, 70, 72, 70, 72, 84, 84, 98, 84, 74, 84, 105, 76, 88, 82, 70, 74, 74];
closing.forEach((y, i) => {
  auctionBar(698 + i * 2.66, y, 1410, i < 4 || (i > 7 && i < 16) ? GREEN : RED);
  auctionBar(698 + i * 2.66, 66, closingTop[i], i < 3 || (i > 7 && i < 15) ? GREEN : RED);
});
document.getElementById("auction").innerHTML = auction;
```
